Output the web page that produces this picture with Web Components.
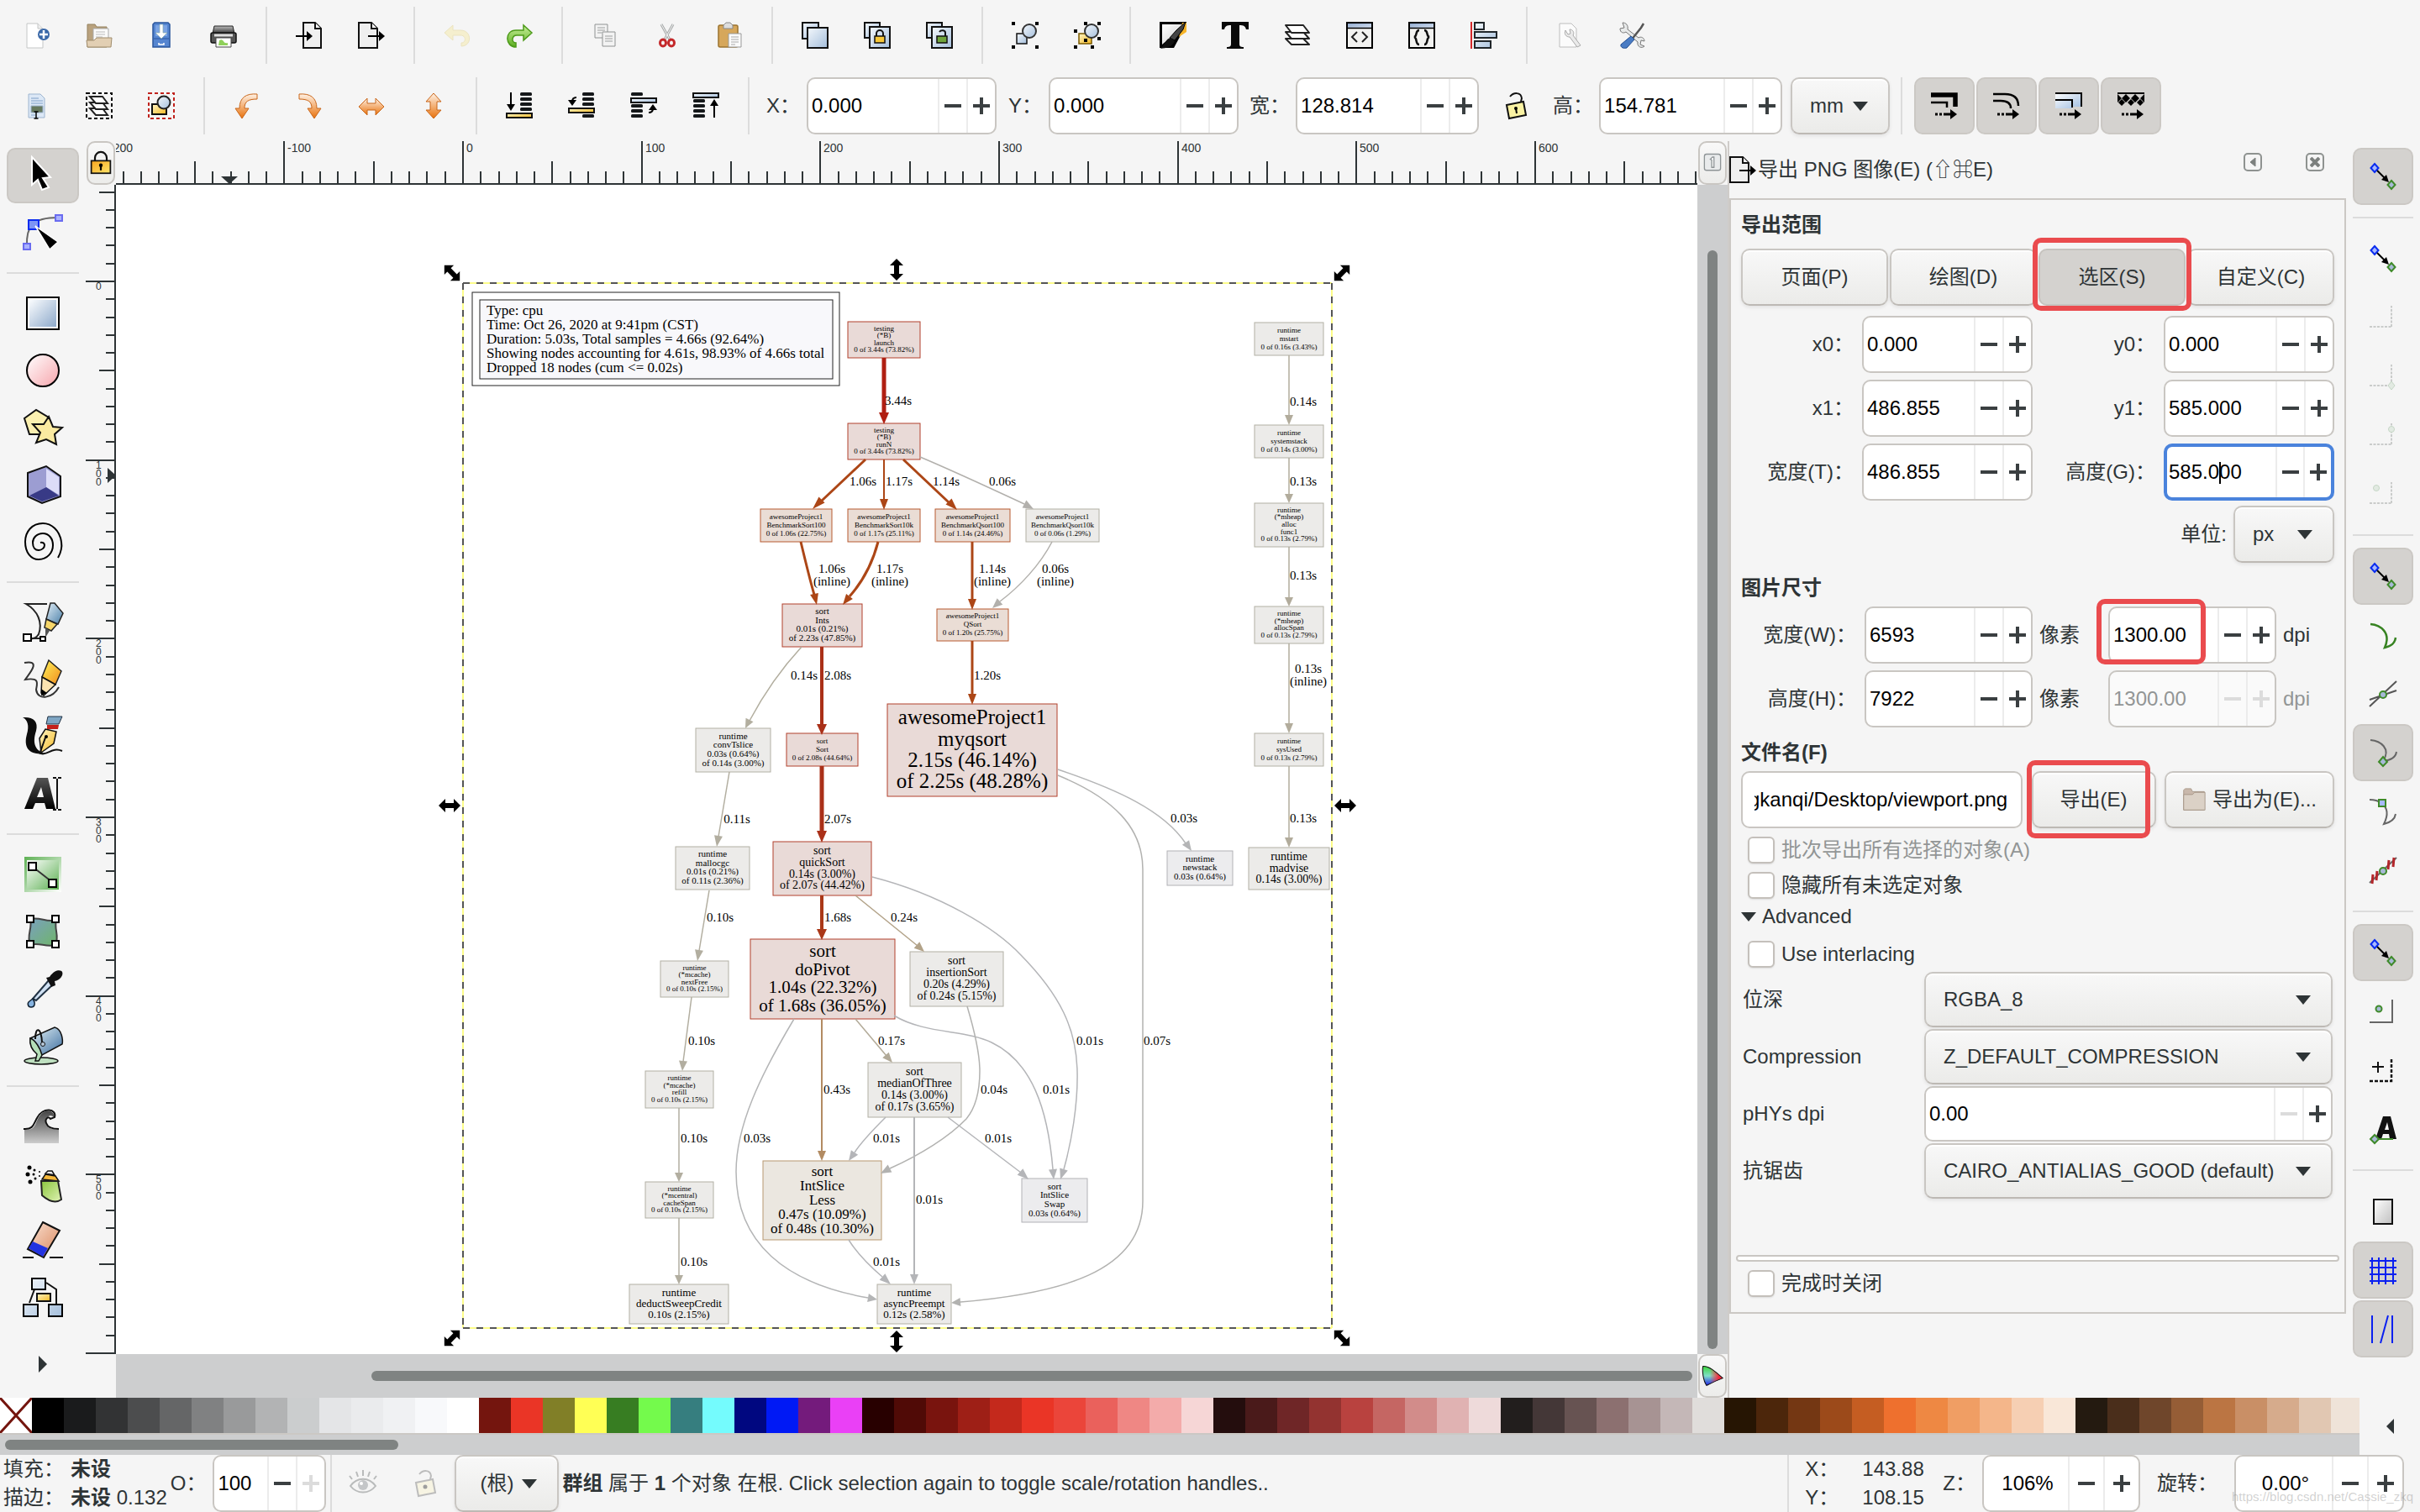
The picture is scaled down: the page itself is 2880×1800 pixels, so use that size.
<!DOCTYPE html>
<html lang="zh-CN">
<head>
<meta charset="utf-8">
<title>Inkscape</title>
<style>
  html, body {
    margin: 0;
    height: 100%;
    overflow: hidden;
  }
  body {
    font: 24px/32px "Liberation Sans", "Noto Sans CJK SC", sans-serif;
    color: #2e3436;
    background: #f5f5f5;
    --border: #c9c6c2;
    --line: #dcdcdc;
    --pressed: #d4d2cf;
    --trough: #cdcecf;
    --thumb: #7f8382;
  }
</style>
</head>
<body>
<draw-app></draw-app>

<script>
const grad = (id, a, b, dir = 'x2="1" y2="1"') =>
  `<linearGradient id="${id}" x1="0" y1="0" ${dir}><stop offset="0" stop-color="${a}"/><stop offset="1" stop-color="${b}"/></linearGradient>`
const DOWN = 'x2="0" y2="1"'
const BLUE = grad('b', '#f4f8fc', '#a5bfdc')
const GOLD = grad('g', '#fff6c8', '#f5b921')
const ORANGE = grad('o', '#fff1e4', '#e8720c', DOWN)

const PADLOCK_BODY = (x, y, fill) =>
  `<path d="M${x + 2} ${y}v-3a4 4 0 0 1 8 0v3" fill="none" stroke="#111" stroke-width="2"/><rect x="${x}" y="${y}" width="12" height="8" fill="${fill}" stroke="#111" stroke-width="1.5"/>`
const SNAP = `<path d="M8 8l11 11" stroke="#000" stroke-width="2"/><path d="M23 23l-3-9-6 6z" fill="#000"/>
  <path d="M6 1l4.500 5L6 11 1.500 6z" fill="#a9b9ff" stroke="#0a2cf0" stroke-width="2"/><path d="M26 21l4.500 5-4.500 5-4.500-5z" fill="#a7b9d6" stroke="#3f8a2a" stroke-width="2"/>`
const CORNER = '<path d="M0 27h26M26 27V2" fill="none" stroke="#8b908e" stroke-width="2" stroke-dasharray="3 1.500"/>'
const CODE_DOC = `${grad('p', '#8fa9cf', '#d8e3f2')}<rect x="1" y="1" width="30" height="30" fill="#f3f3f1" stroke="#000" stroke-width="2"/><rect x="2" y="2" width="28" height="5" fill="url(#p)"/><path d="M1 7.500h30" stroke="#000" stroke-width="1.500"/>`
const MOVE = '<path d="M5 26h3m2 0h3m2 0h9" stroke="#000" stroke-width="3"/><path d="M23 20l8 6-8 6z"/>'
const bars = (x, ys) => ys.map((y) => `<rect x="${x}" y="${y}" width="14" height="4" rx="1.500" fill="#15181a"/>`).join('')
const bend = (t) => `<g transform="${t}"><path d="M28 2C15 1 7 6 7 19H2l8 12 8-12h-5c0-8 4-11 15-11z" fill="url(#o)" stroke="#c9661a" stroke-width="1"/></g>`

// 32 unit icons
const SMALL = {
  new: `<path d="M4 2h13l6 6v23H4z" fill="#fff" stroke="#c4c6c6"/><path d="M17 2v6h6" fill="#eee" stroke="#c4c6c6"/><circle cx="24" cy="15" r="7" fill="#3a68a8"/><path d="M24 10v10M19 15h10" stroke="#fff" stroke-width="2.500"/>`,
  open: `<path d="M2 30V3h9l2 3h12v24z" fill="#b9a27e" stroke="#94805d"/><path d="M9 8h18v15H9z" fill="#fafafa" stroke="#aaa"/><path d="M12 12h11M12 15h11M12 18h8" stroke="#bbb"/><path d="M1 22h9l3-3h18l-1 11H2z" fill="#e2cfb3" stroke="#a08d6c"/>`,
  save: `<path d="M6 3l2-2h16l2 2v27H6z" fill="#5585d0" stroke="#2a559c" stroke-width="1.500"/><path d="M7 20h18" stroke="#2a559c"/><path d="M9 4h14v13H9z" fill="#7aa3e4"/><path d="M14 3h4v10h5l-7 7-7-7h5z" fill="#fff" stroke="#8aa" stroke-width=".7"/><path d="M13 25v2h6v-2" fill="none" stroke="#fff" stroke-width="1.500"/>`,
  print: `${grad('k', '#bbb', '#333', DOWN)}<path d="M5 5h22l2 9H3z" fill="url(#k)" stroke="#222"/><rect x="1" y="13" width="30" height="12" rx="2" fill="#555" stroke="#111" stroke-width="1.500"/><path d="M5 16h22" stroke="#ddd" stroke-width="3"/><path d="M7 19h18v11H7z" fill="#fff" stroke="#444"/><path d="M11 22c6-3 4 5 10 3v3H10z" fill="#8fd05a"/>`,
  import: `<path d="M9 1h14l7 7v23H9z" fill="#f0f0f0" stroke="#111" stroke-width="2"/><path d="M23 1v7h7" fill="#fff" stroke="#111" stroke-width="2"/><path d="M0 17h14" stroke="#000" stroke-width="2"/><path d="M13 11l7 6-7 6z"/>`,
  export: `<path d="M1 1h15l7 7v23H1z" fill="#efefef" stroke="#111" stroke-width="2"/><path d="M16 1v7h7" fill="#fff" stroke="#111" stroke-width="2"/><path d="M12 17h14" stroke="#000" stroke-width="2"/><path d="M25 11l7 6-7 6z"/>`,
  undo: `<g opacity=".45"><path d="M1 13L11 4v6h9c14 0 14 19 1 19v-4c6 0 6-9-1-9h-9v6z" fill="#f6e8a0" stroke="#e0cf80"/></g>`,
  redo: `${grad('q', '#c8f09a', '#5cae20', DOWN)}<path d="M31 13L21 4v6h-9C-2 10-1 30 12 30v-5c-6 0-5-9 1-9h8v6z" fill="url(#q)" stroke="#4d9a1a" stroke-width="1.500"/>`,
  copy: `<g fill="#f3f3f3" stroke="#8f9292"><path d="M4 3h15v16H4z"/><path d="M13 12h15v17H13z"/></g><path d="M7 7h9M7 10h9M7 13h5M16 17h9M16 20h9M16 23h9" stroke="#9b9e9e"/>`,
  cut: `<path d="M9 3l10 18M23 3L13 21" stroke="#a8abab" stroke-width="3"/><path d="M9 3l10 18M23 3L13 21" stroke="#f4f4f4"/><g fill="none" stroke="#c4282a" stroke-width="3"><ellipse cx="11" cy="25" rx="3.500" ry="4"/><ellipse cx="21" cy="25" rx="3.500" ry="4"/></g>`,
  paste: `<rect x="3" y="4" width="23" height="26" rx="2" fill="#d6a75b" stroke="#9c7430" stroke-width="1.500"/><path d="M9 8V4l3-3h5l3 3v4z" fill="#ddd" stroke="#888"/><path d="M15 14h15v16H15z" fill="#fafafa" stroke="#999"/><path d="M18 18h9M18 21h9M18 24h9M18 27h5" stroke="#aaa"/>`,
  duplicate: `${BLUE}<g stroke="#111" stroke-width="2" fill="url(#b)"><path d="M1 1h19v19H1z"/><path d="M7 7h24v24H7z"/></g>`,
  clone: `${BLUE}<g stroke="#111" stroke-width="2" fill="url(#b)"><path d="M1 1h18v18H1z"/><path d="M7 6h24v25H7z"/></g>${PADLOCK_BODY(13, 17, '#f8c83a')}`,
  unlink: `${BLUE}<g stroke="#111" stroke-width="2" fill="url(#b)"><path d="M1 1h18v18H1z"/><path d="M7 6h24v25H7z"/></g><rect x="13" y="17" width="12" height="8" fill="#6fa43c" stroke="#111" stroke-width="1.500"/><path d="M23 17v-4c0-3-5-4-7-1" fill="none" stroke="#111" stroke-width="2"/>`,
  group: `${BLUE}<path d="M6 14h12v12H6z" fill="url(#b)" stroke="#111" stroke-width="1.500"/><ellipse cx="21" cy="11" rx="8" ry="8" fill="url(#b)" stroke="#333" stroke-width="2"/><path d="M0 0h4v4H0zM28 0h4v4h-4zM0 28h4v4H0zM28 28h4v4h-4z"/>`,
  ungroup: `${BLUE}${GOLD}<path d="M6 14h15v12H6z" fill="url(#g)" stroke="#7a5a00" stroke-width="1.500"/><ellipse cx="21" cy="11" rx="8" ry="8" fill="url(#b)" stroke="#333" stroke-width="2"/><path d="M0 9h4v4H0zM12 0h4v4h-4zM28 0h4v4h-4zM0 28h4v4H0zM20 28h4v4h-4zM28 18h4v4h-4zM12 20h4v4h-4z"/>`,
  fill: `${grad('w', '#fff', '#ccc')}<path d="M0 0h32v3L17 31H0z" fill="#000"/><path d="M3 3h25L15 17 3 27z" fill="url(#w)"/><path d="M27 1h5v11l-9 6z" fill="#f7b52a"/><path d="M31 0L20 10l-8 9 6 3L28 9z" fill="#444" stroke="#000"/><path d="M13 19l5 4c-3 7-10 8-17 9 6-5 6-12 12-13z" fill="#111"/>`,
  text: '<path d="M0 0h32v9h-3c-1-4-3-5-8-5v22c0 3 1 4 5 4v2H6v-2c4 0 5-1 5-4V4C6 4 4 5 3 9H0z" fill="#0a0a0a"/>',
  layers: `<g fill="#fff" stroke="#222" stroke-width="2" stroke-linejoin="round"><path d="M2 20h21l7 7H9z"/><path d="M2 12h21l7 8H9z"/><path d="M2 4h21l7 9H9z"/></g>`,
  xml: `${CODE_DOC}<path d="M13 12l-6 6 6 6M19 12l6 6-6 6" fill="none" stroke="#222" stroke-width="2"/>`,
  css: `${CODE_DOC}<path d="M13 10c-5 0-2 7-6 8 4 1 1 9 6 9M19 10c5 0 2 7 6 8-4 1-1 9-6 9" fill="none" stroke="#111" stroke-width="2.500"/>`,
  align: `${BLUE}<path d="M1 0v32" stroke="#d4282a" stroke-width="2"/><g fill="url(#b)" stroke="#20262a" stroke-width="2"><path d="M5 1h11v8H5zM5 12h26v7H5zM5 23h19v8H5z"/></g>`,
  docprefs: `<g opacity=".6"><path d="M4 2h14l6 6v22H4z" fill="#fff" stroke="#999"/><path d="M11 10c-2 5 1 8 5 8l9 12 4-2-9-12c2-3 0-7-4-7l1 5-3 1z" fill="#e4e4e4" stroke="#777"/></g>`,
  prefs: `<path d="M5 1l2 6-5 1c0 5 4 6 7 4l14 12c-1 6 5 8 8 5l-5-2 1-5 4 1c0-4-4-6-7-4L11 9c1-5-2-8-6-8z" fill="#e8eaea" stroke="#777"/><path d="M30 2l-3 5-12 15" stroke="#555" stroke-width="2.500"/><path d="M15 17l4 4-9 10c-3 1-8 0-7-4z" fill="#4a7cc4" stroke="#234f92"/>`,
  selall: `<path d="M6 2h14l5 5v23H6z" fill="#dce8f6" stroke="#9db4cf"/><path d="M9 7h9M9 10h14M9 13h14M9 27h5" stroke="#7ea0c8"/><path d="M9 16h14v8H9z" fill="#66795e" stroke="#9db4cf"/><path d="M15 23v8M12.500 23h5M12.500 31h5" stroke="#000" stroke-width="1.500"/>`,
  sellayers: `<rect x="1" y="1" width="30" height="30" fill="none" stroke="#000" stroke-width="2" stroke-dasharray="4 3"/><g fill="#fff" stroke="#222" stroke-width="2"><path d="M5 19h15l6 8H12z"/><path d="M5 12h15l6 8H12z"/><path d="M5 5h15l6 8H12z"/></g>`,
  deselect: `${BLUE}${GOLD}<rect x="1" y="1" width="30" height="30" fill="none" stroke="#c0221c" stroke-width="2" stroke-dasharray="4 3"/><path d="M5 14h17v12H5z" fill="url(#g)" stroke="#111" stroke-width="2"/><circle cx="19" cy="12" r="7.500" fill="url(#b)" stroke="#222" stroke-width="2"/>`,
  rotl: `${ORANGE}${bend('')}`,
  rotr: `${ORANGE}${bend('translate(32 0) scale(-1 1)')}`,
  fliph: `${ORANGE}<path d="M1 17l10-10v6h10V7l10 10-10 10v-6H11v6z" fill="url(#o)" stroke="#c9661a"/>`,
  flipv: `${ORANGE}<path d="M16 1l9 10h-5v10h5l-9 10-9-10h5V11H7z" fill="url(#o)" stroke="#c9661a"/>`,
  bottom: `${GOLD}${bars(17, [0, 6, 12, 18])}<rect x="1" y="25" width="30" height="5" fill="url(#g)" stroke="#111" stroke-width="2"/><path d="M6 0v16" stroke="#000" stroke-width="2"/><path d="M1 14h10L6 22z"/>`,
  lower: `${GOLD}${bars(17, [0, 6, 12, 26])}<rect x="1" y="19" width="30" height="5" fill="url(#g)" stroke="#111" stroke-width="2"/><path d="M10 6c-4 0-5 2-5 5" fill="none" stroke="#000" stroke-width="2"/><path d="M0 9h10l-5 7z"/>`,
  raise: `${BLUE}${bars(1, [0, 14, 20, 26])}<rect x="1" y="7" width="30" height="5" fill="url(#b)" stroke="#111" stroke-width="2"/><path d="M22 24c4 0 5-2 5-5" fill="none" stroke="#000" stroke-width="2"/><path d="M22 21h10l-5-7z"/>`,
  top: `${BLUE}${bars(1, [8, 14, 20, 26])}<rect x="1" y="1" width="30" height="5" fill="url(#b)" stroke="#111" stroke-width="2"/><path d="M26 30V14" stroke="#000" stroke-width="2"/><path d="M21 16h10l-5-8z"/>`,
  unlock: `<path d="M5 15l20-4 3 16-20 4z" fill="#fbf3a3" stroke="#111" stroke-width="2"/><path d="M22 11l1-4C22-1 13 0 9 5" fill="none" stroke="#111" stroke-width="2"/><circle cx="16" cy="19" r="2"/><path d="M16 19l1 6" stroke="#000" stroke-width="2"/>`,
  lock: `${grad('l', '#f5a31d', '#ffe66b')}<path d="M8 14V9a8 8 0 0 1 16 0v5" fill="none" stroke="#111" stroke-width="2.500"/><rect x="3" y="13" width="26" height="17" fill="url(#l)" stroke="#111" stroke-width="2"/><circle cx="16" cy="19" r="2.500"/><path d="M16 19v7" stroke="#000" stroke-width="2.500"/>`,
  trstroke: `<path d="M0 3h29v14" fill="none" stroke="#000" stroke-width="5.500"/><path d="M0 12h19v6" fill="none" stroke="#000" stroke-width="2.500"/>${MOVE}`,
  trcorner: `<path d="M0 2h14c11 0 16 5 16 14M0 10h9c8 0 12 3 12 9" fill="none" stroke="#000" stroke-width="2.500"/>${MOVE}`,
  trgrad: `${grad('t', '#fff', '#9fbde0')}<path d="M0 1h31v16H20v2H0z" fill="url(#t)"/><path d="M0 1h31v16M0 9h20v9" fill="none" stroke="#000" stroke-width="2"/>${MOVE}`,
  trpattern: `<path d="M0 0h32v2H0z"/><path d="M0 2l5 5-5 5zM5 7l5-5 5 5-5 5zM16 7l5-5 5 5-5 5zM32 2l-5 5 5 5z"/><path d="M5 8l4 4-4 4-4-4zM16 8l4 4-4 4-4-4zM27 8l4 4-4 4-4-4z"/>${MOVE}`,
  zoomone: `<rect x="5" y="4" width="22" height="22" rx="3" fill="#e9ebec" stroke="#8e9496" stroke-width="1.500"/><path d="M13 11l3-3h2v14h-3V12z" fill="#fff" stroke="#8e9496" stroke-width="1.500"/>`,
  cms: `<defs><linearGradient id="c" x1="0" y1="0" x2="0" y2="1"><stop offset="0" stop-color="#3bd43b"/><stop offset=".5" stop-color="#7fe0c8"/><stop offset="1" stop-color="#2020e8"/></linearGradient><linearGradient id="r" x1="0" y1="0" x2="1" y2="0"><stop offset=".35" stop-color="#f33" stop-opacity="0"/><stop offset=".8" stop-color="#f32a3c"/></linearGradient></defs><path d="M3 3c8-1 17 7 27 16-8 3-14 6-22 10C3 22 2 9 3 3z" fill="url(#c)"/><path d="M3 3c8-1 17 7 27 16-8 3-14 6-22 10C3 22 2 9 3 3z" fill="url(#r)" stroke="#111" stroke-width="1.200"/>`,
  snap: SNAP,
  bbox: `${CORNER}`,
  bboxcorner: `${CORNER}<path d="M26 22l4 5-4 5-4-5z" fill="#c8dcc8" stroke="#7fa87f"/>`,
  bboxmid: `${CORNER}<circle cx="26" cy="9" r="3.500" fill="#c8dcc8" stroke="#7fa87f"/>`,
  bboxcenter: `${CORNER}<circle cx="8" cy="9" r="3.500" fill="#c8dcc8" stroke="#7fa87f"/>`,
  path: '<path d="M1 3c12 1 25 10 17 28 8-2 12-5 13-12" fill="none" stroke="#378322" stroke-width="2.500"/>',
  cross: '<path d="M0 23L32 12M0 31L32 1" stroke="#555" stroke-width="2"/><circle cx="16" cy="17" r="4" fill="#a7b9d6" stroke="#3f8a2a" stroke-width="2"/>',
  cusp: '<path d="M1 1c12 1 25 10 15 25 10-1 15-4 16-11" fill="none" stroke="#666" stroke-width="2"/><path d="M16 21l5 6-5 5-5-5z" fill="#a7b9d6" stroke="#3f8a2a" stroke-width="2"/>',
  smooth: '<path d="M0 2c7 0 10 1 14 4 7 5 9 13 3 25 8-2 13-5 14-12" fill="none" stroke="#666" stroke-width="2"/><rect x="11" y="2" width="8" height="8" fill="#a7b9ff" stroke="#3f8a2a" stroke-width="2"/>',
  midline: '<path d="M0 31L32 1" stroke="#666" stroke-width="2"/><path d="M4 21l-1 11M9 17l-1 11M23 4l-1 11M29 1l-1 11" stroke="#b3262a" stroke-width="3"/><circle cx="16" cy="17" r="4" fill="#a7b9d6" stroke="#3f8a2a" stroke-width="2"/>',
  objcenter: '<path d="M0 29h27V2" fill="none" stroke="#666" stroke-width="2"/><circle cx="11" cy="13" r="3.500" fill="#a7b9d6" stroke="#3f8a2a" stroke-width="2"/>',
  rotcenter: '<path d="M0 29h26V2" fill="none" stroke="#111" stroke-width="2.500" stroke-dasharray="4 2"/><path d="M10 6v13M3 12h14" stroke="#111" stroke-width="2"/>',
  baseline: '<path d="M7 28L16 1h9l7 27h-8l-1-6h-7l-2 6zM18 17h5l-2-9z" fill="#111"/><path d="M6 28h22" stroke="#3f8a2a" stroke-width="2"/><path d="M6 23l5 5-5 5-5-5z" fill="#a7b9d6" stroke="#3f8a2a" stroke-width="2"/>',
  page: `${grad('w', '#fff', '#c0c0c0')}<rect x="5" y="2" width="22" height="29" fill="url(#w)" stroke="#111" stroke-width="2"/>`,
  grid: '<path d="M0 5h32M0 13h32M0 21h32M0 29h32M3 1v32M11 1v32M19 1v32M28 1v32" stroke="#0a20f0" stroke-width="2"/>',
  guides: '<path d="M3 0v33M27 0v33M13 33L22 0" stroke="#0a20f0" stroke-width="2"/>',
  folder: '<path d="M2 30V3l2-2h8l2 4h16v25z" fill="#c9b8ab" stroke="#a39284"/><path d="M2 30V9h12l3-3h14v24z" fill="#dbd1c6" stroke="#a39284"/>',
  eye: '<g fill="none" stroke="#b9bbbb" stroke-width="2"><path d="M1 19c8-11 22-11 30 0-8 10-22 10-30 0z"/><path d="M3 11L0 7M10 8L8 2M16 7V0M22 8l2-6M29 11l3-4"/></g><circle cx="16" cy="18" r="6" fill="#c4c6c8"/><circle cx="14" cy="16" r="2" fill="#fff"/>',
  unlockdim: '<g opacity=".35"><path d="M5 15l20-4 3 16-20 4z" fill="#fbf3c3" stroke="#555" stroke-width="2"/><path d="M22 11l1-4C22-1 13 0 9 5" fill="none" stroke="#555" stroke-width="2"/><circle cx="16" cy="20" r="2.500"/></g>',
}

// 48 unit toolbox icons
const LARGE = {
  arrow: '<path d="M11 2l22 24-9 1 7 11-8 3-5-12-7 6z" fill="#000" stroke="#fff" stroke-width="2"/>',
  node: '<path d="M5 40C4 16 12 6 42 6" fill="none" stroke="#666" stroke-width="2"/><g fill="#aab2ff" stroke="#6a6cf0" stroke-width="2"><path d="M1 37h8v7H1zM39 3h8v7h-8z"/></g><path d="M7 9h12v11H7z" fill="#7d95f5" stroke="#0a2cf0" stroke-width="2"/><path d="M15 16l27 19-10 9z" stroke="#fff" stroke-width="1.500"/>',
  rect: `${grad('b', '#fafcfe', '#8eaacb')}<rect x="5" y="5" width="38" height="38" fill="#fff" stroke="#000" stroke-width="2"/><rect x="8" y="8" width="32" height="32" fill="url(#b)"/>`,
  ellipse: `${grad('p', '#fff', '#f6a5ac')}<circle cx="24" cy="24" r="19" fill="url(#p)" stroke="#000" stroke-width="2"/>`,
  star: `<path d="M2 13L16 3l15 9-6 20H8z" fill="#fbf0b0" stroke="#111" stroke-width="2"/><path d="M31 11l5 12 11 1-9 8 2 12-12-6-12 4 5-12-9-10 13 0z" fill="#faeaa0" stroke="#111" stroke-width="2"/>`,
  cube: `<path d="M6 10L28 2l17 12v24L23 46 6 38z" fill="#9c9dd2" stroke="#111" stroke-width="2"/><path d="M28 5v22l15 9V15z" fill="#dcdcf8"/><path d="M8 37l20-10 15 10-20 7z" fill="#383a86"/>`,
  spiral: '<path d="M42 43C46 36 47 30 46 24C44 10 34 2 24 2C11 2 3 12 3 24C3 37 10 45 19 45C29 45 36 37 36 28C36 20 31 14 24 14C17 14 12 19 12 25C12 31 15 34 19 34C23 34 26 31 26 28C26 26 24 24 21 25" fill="none" stroke="#000" stroke-width="2"/>',
  pen: `${grad('b', '#e1eef7', '#4a7fa8')}<path d="M29 2H4c14 8 20 22 15 36-3 5-8 6-13 5M6 43h18" fill="none" stroke="#222" stroke-width="2"/><path d="M1 38h9v8H1zM21 41h6v5h-6z" fill="#fff" stroke="#000" stroke-width="2"/><path d="M33 1h5l10 12-6 13-14-6z" fill="url(#b)" stroke="#222" stroke-width="1.500"/><path d="M28 20l13 6-7 8-8-4z" fill="#f6d66a" stroke="#222" stroke-width="1.500"/><path d="M27 30l5 4-5 8z" fill="#555"/>`,
  pencil: `${grad('y', '#fff45a', '#f08a1c')}<path d="M2 4C24 0 6 19 3 24c18-3 14 5 13 12 2 14 20 10 27-3" fill="none" stroke="#333" stroke-width="2"/><path d="M31 1l15 13-7 16-16-9z" fill="url(#y)" stroke="#222" stroke-width="1.500"/><path d="M23 21l16 9-14 13-3-3z" fill="#fbe3b0" stroke="#111" stroke-width="1.500"/><path d="M22 35l7 5-7 3z"/>`,
  calligraphy: `${GOLD}<path d="M0 1c12-1 19 4 16 16-4 12-3 23 10 27C10 46 0 39 5 21 8 11 6 4 0 1z" fill="#0c0c0c"/><path d="M17 42c12 8 16-7 30-1" fill="none" stroke="#111" stroke-width="2"/><path d="M30 0h17l-4 9H28z" fill="#7fa6c4" stroke="#234"/><path d="M29 10h14l-1 5H29z" fill="#c4211b"/><path d="M27 15l13 3-3 14-15 11-2-17z" fill="url(#g)" stroke="#111" stroke-width="1.500"/><path d="M21 42l6-17" stroke="#111" stroke-width="2"/><circle cx="28" cy="24" r="2"/>`,
  text: `${grad('k', '#555', '#000', DOWN)}<path d="M2 42L17 5h13l9 37H28l-2-7H15l-3 7zM17 28h8l-3-12z" fill="url(#k)"/><path d="M41 6v36M36 5h4M42 5h4M36 43h4M42 43h4" stroke="#111" stroke-width="2"/>`,
  gradient: `${grad('n', '#fff', '#5db053')}${grad('m', '#5db053', '#fff')}<rect x="2" y="3" width="44" height="42" fill="url(#m)"/><rect x="5" y="7" width="38" height="35" fill="url(#n)"/><path d="M12 15l23 18" stroke="#333" stroke-width="2"/><path d="M7 10h9v9H7zM31 30h9v9h-9z" fill="#fff" stroke="#000" stroke-width="2"/>`,
  mesh: `${grad('m', '#7aa0c0', '#6fb56a')}<path d="M9 9c12-3 20 5 31 1-3 12 4 18-1 30-12 3-20-4-30 0-5-12 3-19 0-31z" fill="url(#m)" stroke="#444" stroke-width="2"/><g fill="#fff" stroke="#000" stroke-width="2"><path d="M5 5h8v8H5zM35 5h8v8h-8zM5 35h8v8H5zM35 35h8v8h-8z"/></g>`,
  dropper: `<path d="M12 36l19-22 5 5-20 19z" fill="#cfe0f2" stroke="#234" stroke-width="2"/><path d="M28 11l4-1c7-10 14-8 15-6 2 4-3 10-9 11l1 5-5 2z" fill="#111"/><path d="M12 36c4 6 2 10-2 10s-5-5-2-7z" fill="#86b3e0" stroke="#123" stroke-width="1.500"/>`,
  bucket: `${grad('b', '#eaf6f8', '#3c6ea0')}<ellipse cx="22" cy="42" rx="20" ry="4" fill="#bfe0c0" stroke="#111" stroke-width="1.500"/><path d="M9 15L38 2c9 2 10 16 9 20L23 35C14 30 8 22 9 15z" fill="url(#b)" stroke="#111" stroke-width="1.500"/><path d="M9 15c6 2 12 12 14 20l-4 7h-4l2-8C11 29 8 22 9 15z" fill="#b5dfb8" stroke="#111" stroke-width="1.500"/><path d="M15 16c0-16 7-14 8 4" fill="none" stroke="#111" stroke-width="2"/><circle cx="24" cy="22" r="2.500" fill="#bcd" stroke="#111"/>`,
  tweak: `${grad('k', '#444', '#ccc', DOWN)}<path d="M2 28c12 1 12-5 16-13C24 2 38 3 38 14c-3-5-11-3-10 5 1 7 8 9 15 9v16H2z" fill="url(#k)"/><path d="M1 27c12 1 12-6 16-13C24 0 41 3 38 13l-5 2c-2-4-7 0-5 5 2 6 8 7 15 7" fill="none" stroke="#111" stroke-width="2"/>`,
  spray: `${grad('s', '#8bc63e', '#dff2b4')}<circle cx="8" cy="5" r="2.500"/><circle cx="6" cy="13" r="2.500"/><circle cx="9" cy="22" r="2.500"/><circle cx="14" cy="8" r="1.500"/><circle cx="13" cy="13" r="1.500"/><circle cx="15" cy="18" r="1.500"/><circle cx="20" cy="10" r="1"/><circle cx="20" cy="15" r="1"/><path d="M27 12l3-3h5l3 5z" fill="#eee" stroke="#111" stroke-width="1.500"/><path d="M23 19l4-6 12 2 4 6z" fill="#f5b83a" stroke="#111" stroke-width="1.500"/><path d="M22 21h20l4 22c-7 5-15 2-23-5z" fill="url(#s)" stroke="#222" stroke-width="2"/>`,
  eraser: `${grad('e', '#fbe4d6', '#d9855a')}<path d="M24 2l20 10-19 32-19-10z" fill="url(#e)" stroke="#111" stroke-width="2"/><path d="M12 25l18 8-6 10L7 33z" fill="#2233e0"/><path d="M0 44h13M32 44h16" stroke="#111" stroke-width="2"/>`,
  connector: `${BLUE}${GOLD}<path d="M28 6l12 8v18M14 14L8 30" fill="none" stroke="#111" stroke-width="2"/><g fill="url(#b)" stroke="#000" stroke-width="2"><path d="M11 1h16v13H11zM1 32h17v14H1zM31 32h16v14H31z"/></g><path d="M17 19h16v9H17z" fill="url(#g)" stroke="#111" stroke-width="2"/>`,
}

// Shared plumbing: each element renders css() + html() once connected.
class View extends HTMLElement {
  connectedCallback() {
    if (this.shadowRoot) return
    this.attachShadow({ mode: 'open' })
    this.shadowRoot.innerHTML = `<style>*{box-sizing:border-box}${this.css()}</style>${this.html()}`
    this.ready()
  }
  attr(name, fallback = '') {
    return this.getAttribute(name) ?? fallback
  }
  css() { return '' }
  html() { return '<slot></slot>' }
  ready() {}
}

class AppIcon extends View {
  css() {
    const s = this.attr('size', '32')
    return `:host{display:block;flex:none;width:${s}px;height:${s}px} svg{display:block;width:100%;height:100%;overflow:visible}`
  }
  html() {
    const name = this.attr('name')
    const large = this.hasAttribute('large')
    const box = large ? 48 : 32
    return `<svg viewBox="0 0 ${box} ${box}" aria-hidden="true">${(large ? LARGE : SMALL)[name]}</svg>`
  }
}

class ToolButton extends View {
  css() {
    return `
      :host { display: block; flex: none; width: 74px; height: 68px; padding: 0 1px; box-sizing: border-box; }
      :host([large]) { width: 86px; height: 66px; padding: 0; }
      :host([side]) { width: 72px; padding: 0; }
      :host([corner]) { width: 100%; height: 100%; padding: 0 1px; }
      button { width: 100%; height: 100%; padding: 0; display: grid; place-items: center; border: 2px solid transparent; border-radius: 10px; background: none; }
      :host([pressed]) button { background: var(--pressed); border-color: #cbc8c4; }
      :host([corner]) button { border-color: var(--border); background: linear-gradient(#f8f8f8, #ececea); }
    `
  }
  html() {
    const large = this.hasAttribute('large')
    const size = this.attr('size', large ? '48' : '32')
    return `<button type="button" aria-label="${this.attr('icon')}"><app-icon name="${this.attr('icon')}" size="${size}" ${large ? 'large' : ''}></app-icon></button>`
  }
}

class ToolSep extends View {
  css() {
    return `
      :host { display: block; flex: none; width: 2px; height: 68px; margin: 0 13px; background: var(--line); }
      :host([row]) { width: auto; height: 2px; margin: 12px 0; }
    `
  }
  html() { return '' }
}

class SpinBox extends View {
  css() {
    return `
      :host { display: flex; align-items: center; }
      label { flex: 1; text-align: var(--label-align, right); white-space: nowrap; padding-right: var(--label-gap, 8px); }
      .field { position: relative; flex: none; display: flex; width: var(--field, 203px); height: 68px; border: 2px solid var(--border); border-radius: 10px; background: #fff; overflow: hidden; }
      :host([short]) .field { height: 66px; }
      input { flex: 1; min-width: 0; border: 0; padding: 0 0 0 4px; background: none; font: inherit; color: #000; outline: 0; text-align: var(--align, left); }
      button { flex: none; width: var(--step, 34px); padding: 0; border: 0; border-left: 2px solid #ececec; background: none; display: grid; place-items: center; }
      svg { width: 20px; height: 20px; stroke: #3a3f41; stroke-width: 4; }
      .off svg { stroke: #dcdcdc; }
      :host([focused]) .field { border: 4px solid #4a83dc; }
      :host([focused]) input { padding-left: 2px; }
      :host([focused]) button { width: 33px; }
      :host([disabled]) .field { background: #fafafa; }
      :host([disabled]) input { color: #929595; }
      .caret { position: absolute; left: 62px; top: 18px; width: 2px; height: 26px; background: #000; }
    `
  }
  html() {
    const dis = this.hasAttribute('disabled')
    const off = this.attr('off')
    const cls = (k) => (dis || off === k ? 'class="off"' : '')
    const label = this.attr('label')
    return `
      ${label ? `<label for="v">${label}</label>` : ''}
      <div class="field">
        <input id="v" value="${this.attr('value')}" ${label ? '' : `aria-label="${this.attr('name')}"`} ${dis ? 'disabled' : ''}>
        <button type="button" ${cls('minus')} aria-label="-"><svg viewBox="0 0 20 20"><path d="M0 10h20"/></svg></button>
        <button type="button" ${cls('plus')} aria-label="+"><svg viewBox="0 0 20 20"><path d="M0 10h20M10 0v20"/></svg></button>
        ${this.hasAttribute('focused') ? '<span class="caret"></span>' : ''}
      </div>`
  }
}

class ComboBox extends View {
  css() {
    return `
      :host { display: flex; align-items: center; }
      label { flex: 1; white-space: nowrap; padding-right: 8px; }
      .box { flex: none; display: grid; width: var(--field, 118px); height: var(--h, 68px); border: 2px solid var(--border); border-bottom-color: #bdb9b4; border-radius: 10px; background: linear-gradient(#f8f8f8, #ebebe9); box-shadow: inset 0 2px #fff, 0 2px 4px rgba(0,0,0,.08); }
      select, svg { grid-area: 1 / 1; }
      select { appearance: none; border: 0; background: none; padding: 0 0 0 var(--inset, 21px); font: inherit; color: inherit; }
      svg { justify-self: end; align-self: center; margin-right: var(--arrow, 24px); width: 18px; height: 11px; pointer-events: none; fill: #2e3436; }
    `
  }
  html() {
    const label = this.attr('label')
    return `
      ${label ? `<label for="s">${label}</label>` : ''}
      <div class="box">
        <select id="s" ${label ? '' : 'aria-label="unit"'}><option>${this.attr('value')}</option></select>
        <svg viewBox="0 0 18 11"><path d="M0 0h18l-9 11z"/></svg>
      </div>`
  }
}

class PushButton extends View {
  css() {
    return `
      :host { display: block; }
      button { width: 100%; height: 68px; padding: 0; display: flex; gap: 8px; align-items: center; justify-content: center; font: inherit; color: inherit; white-space: nowrap; border: 2px solid var(--border); border-bottom-color: #bdb9b4; border-radius: 10px; background: linear-gradient(#f8f8f8, #ebebe9); box-shadow: inset 0 2px #fff, 0 2px 4px rgba(0,0,0,.08); }
      :host([pressed]) button { background: var(--pressed); box-shadow: none; border-color: #c6c3bf; }
    `
  }
  html() { return '<button type="button"><slot></slot></button>' }
}

class CheckBox extends View {
  css() {
    return `
      :host { display: block; padding-left: 8px; }
      label { display: flex; align-items: center; gap: 8px; height: 32px; }
      input { appearance: none; flex: none; margin: 0; width: 32px; height: 32px; border: 2px solid #c4c0bb; border-radius: 6px; background: #fff; box-shadow: 0 1px 2px rgba(0,0,0,.1); }
      :host([disabled]) { color: #929595; }
    `
  }
  html() {
    return `<label><input type="checkbox" ${this.hasAttribute('disabled') ? 'disabled' : ''}><slot></slot></label>`
  }
}

// Red frame drawn over the control it wraps.
class MarkBox extends View {
  css() {
    return `
      :host { display: block; position: relative; }
      i { position: absolute; inset: var(--mark, -8px); border: 6px solid #ea4b4e; border-radius: 10px; pointer-events: none; z-index: 1; }
    `
  }
  html() { return '<slot></slot><i></i>' }
}

class CommandBar extends View {
  css() {
    return `:host { display: flex; align-items: center; height: 84px; padding: 0 7px; box-sizing: border-box; flex: none; }`
  }
  html() {
    const groups = [
      ['new', 'open', 'save', 'print'], ['import', 'export'], ['undo', 'redo'], ['copy', 'cut', 'paste'],
      ['duplicate', 'clone', 'unlink'], ['group', 'ungroup'],
      ['fill', 'text', 'layers', 'xml', 'css', 'align'], ['docprefs', 'prefs'],
    ]
    return groups.map((g) => g.map((n) => `<tool-button icon="${n}"></tool-button>`).join('')).join('<tool-sep></tool-sep>')
  }
}

class SelectBar extends View {
  css() {
    return `
      :host { display: flex; align-items: center; height: 84px; padding: 0 7px; box-sizing: border-box; flex: none; }
      spin-box { margin-left: 14px; --field: 226px; }
      .x { margin-left: 7px; }
      .w { --field: 218px; --label-gap: 7px; margin-left: 13px; }
      .h { --field: 218px; --label-gap: 7px; margin-left: 7px; }
      .lock { margin-left: 7px; }
      combo-box { margin-left: 10px; }
    `
  }
  html() {
    const b = (list, extra = '') => list.map((n) => `<tool-button icon="${n}" ${extra}></tool-button>`).join('')
    return `
      ${b(['selall', 'sellayers', 'deselect'])}<tool-sep></tool-sep>
      ${b(['rotl', 'rotr', 'fliph', 'flipv'])}<tool-sep></tool-sep>
      ${b(['bottom', 'lower', 'raise', 'top'])}<tool-sep></tool-sep>
      <spin-box class="x" label="X：" value="0.000"></spin-box>
      <spin-box label="Y：" value="0.000"></spin-box>
      <spin-box class="w" label="宽：" value="128.814"></spin-box>
      <tool-button class="lock" icon="unlock"></tool-button>
      <spin-box class="h" label="高：" value="154.781"></spin-box>
      <combo-box value="mm"></combo-box><tool-sep></tool-sep>
      ${b(['trstroke', 'trcorner', 'trgrad', 'trpattern'], 'pressed')}`
  }
}

class ToolBox extends View {
  css() {
    return `
      :host { display: flex; flex-direction: column; gap: 2px; width: 102px; padding: 8px 8px 0; box-sizing: border-box; flex: none; overflow: hidden; }
      button { margin: auto 0 28px; height: 24px; padding: 0; border: 0; background: none; }
      svg { display: block; width: 10px; height: 20px; margin: 0 auto; fill: #2e3436; }
    `
  }
  html() {
    const groups = [
      ['arrow', 'node'], ['rect', 'ellipse', 'star', 'cube', 'spiral'], ['pen', 'pencil', 'calligraphy', 'text'],
      ['gradient', 'mesh', 'dropper', 'bucket'], ['tweak', 'spray', 'eraser', 'connector'],
    ]
    return groups.map((g) => g.map((n) => `<tool-button large icon="${n}" ${n === 'arrow' ? 'pressed' : ''}></tool-button>`).join('')).join('<tool-sep row></tool-sep>') +
      '<button type="button" aria-label="more"><svg viewBox="0 0 10 20"><path d="M0 0l10 10L0 20z"/></svg></button>'
  }
}

class SnapBar extends View {
  css() {
    return `
      :host { display: flex; flex-direction: column; gap: 2px; width: 88px; padding: 8px; box-sizing: border-box; flex: none; overflow: hidden; }
      .dim { opacity: .4; }
    `
  }
  html() {
    const groups = [
      ['*snap'], ['snap', 'bbox', 'bboxcorner', 'bboxmid', 'bboxcenter'],
      ['*snap', 'path', 'cross', '*cusp', 'smooth', 'midline'],
      ['*snap', 'objcenter', 'rotcenter', 'baseline'], ['page', '*grid', '*guides'],
    ]
    const dim = (n) => (n.startsWith('bbox') ? 'class="dim"' : '')
    return groups.map((g) => g.map((n) => `<tool-button side ${dim(n)} icon="${n.replace('*', '')}" ${n[0] === '*' ? 'pressed' : ''}></tool-button>`).join('')).join('<tool-sep row></tool-sep>')
  }
}

const UNIT = 638 / 30 // ten user units on screen

class RulerBar extends View {
  css() {
    return `
      :host { display: block; overflow: hidden; min-width: 0; min-height: 0; }
      svg { display: block; width: 100%; height: 100%; font-size: 14px; fill: #2e3436; }
      :host([vertical]) svg { font-size: 12px; }
      path.t { fill: none; stroke: #2e3436; stroke-width: 2; }
    `
  }
  html() {
    const vertical = this.hasAttribute('vertical')
    const origin = vertical ? 115 : 413
    const depth = vertical ? 36 : 52
    let d = ''
    let labels = ''
    for (let i = -20; i < 80; i++) {
      const p = Math.round(origin + i * UNIT)
      const from = i % 10 === 0 ? 0 : i % 5 === 0 ? (vertical ? 16 : 24) : (vertical ? 24 : 36)
      d += vertical ? `M${from} ${p}H${depth}` : `M${p} ${from}V${depth}`
      if (i % 10) continue
      const text = String(i * 10)
      if (!vertical) {
        if (p < 1882) labels += `<text x="${p + 4}" y="13">${text}</text>`
      } else if (i >= 0 && i <= 50) {
        [...text].forEach((c, k) => { labels += `<text x="12" y="${p + 10 + k * 10}">${c}</text>` })
      }
    }
    const edge = vertical ? 'M35 0V4000' : 'M0 51H4000'
    const mark = vertical ? 'M26 337l10 9-10 9z' : 'M125 42h20l-10 9z'
    return `<svg><path class="t" d="${d}${edge}"/>${labels}<path d="${mark}"/></svg>`
  }
}

class ScrollTrack extends View {
  css() {
    return `
      :host { display: flex; background: var(--trough); padding: 20px 6px 20px 304px; }
      :host([vertical]) { padding: 78px 12px 6px; }
      i { flex: 1; border-radius: 6px; background: var(--thumb); }
    `
  }
  html() { return '<i></i>' }
}

const RED = ['#b2402c', '#e9dad7']
const RUST = ['#b85a30', '#eaddd5']
const GREY = ['#b2b0a4', '#ecebe9']
const COOL = ['#b2b2b6', '#ececee']
// x, y, width, height, text size, colours, lines
const NODES = [
  [1009, 383, 86, 43, 9, RED, 'testing|(*B)|launch|0 of 3.44s (73.82%)'],
  [1009, 504, 86, 43, 9, RED, 'testing|(*B)|runN|0 of 3.44s (73.82%)'],
  [905, 606, 85, 39, 9, RUST, 'awesomeProject1|BenchmarkSort100|0 of 1.06s (22.75%)'],
  [1009, 606, 86, 39, 9, RUST, 'awesomeProject1|BenchmarkSort10k|0 of 1.17s (25.11%)'],
  [1113, 606, 89, 39, 9, RUST, 'awesomeProject1|BenchmarkQsort100|0 of 1.14s (24.46%)'],
  [1221, 606, 87, 39, 9, GREY, 'awesomeProject1|BenchmarkQsort10k|0 of 0.06s (1.29%)'],
  [931, 719, 95, 51, 11, RED, 'sort|Ints|0.01s (0.21%)|of 2.23s (47.85%)'],
  [1115, 725, 85, 38, 9, RUST, 'awesomeProject1|QSort|0 of 1.20s (25.75%)'],
  [828, 867, 89, 52, 11, GREY, 'runtime|convTslice|0.03s (0.64%)|of 0.14s (3.00%)'],
  [936, 873, 85, 39, 9, RED, 'sort|Sort|0 of 2.08s (44.64%)'],
  [1056, 838, 202, 110, 25, RED, 'awesomeProject1|myqsort|2.15s (46.14%)|of 2.25s (48.28%)'],
  [804, 1008, 88, 51, 11, GREY, 'runtime|mallocgc|0.01s (0.21%)|of 0.11s (2.36%)'],
  [920, 1002, 117, 64, 14, RED, 'sort|quickSort|0.14s (3.00%)|of 2.07s (44.42%)'],
  [786, 1144, 81, 43, 9, GREY, 'runtime|(*mcache)|nextFree|0 of 0.10s (2.15%)'],
  [893, 1118, 172, 95, 21, RED, 'sort|doPivot|1.04s (22.32%)|of 1.68s (36.05%)'],
  [1083, 1133, 111, 65, 14, GREY, 'sort|insertionSort|0.20s (4.29%)|of 0.24s (5.15%)'],
  [768, 1275, 81, 44, 9, GREY, 'runtime|(*mcache)|refill|0 of 0.10s (2.15%)'],
  [1033, 1265, 111, 65, 14, GREY, 'sort|medianOfThree|0.14s (3.00%)|of 0.17s (3.65%)'],
  [908, 1382, 141, 94, 17, ['#b89870', '#ebe7e0'], 'sort|IntSlice|Less|0.47s (10.09%)|of 0.48s (10.30%)'],
  [1216, 1403, 78, 52, 11, COOL, 'sort|IntSlice|Swap|0.03s (0.64%)'],
  [768, 1407, 81, 43, 9, GREY, 'runtime|(*mcentral)|cacheSpan|0 of 0.10s (2.15%)'],
  [749, 1529, 118, 47, 13, GREY, 'runtime|deductSweepCredit|0.10s (2.15%)'],
  [1044, 1529, 88, 47, 13, GREY, 'runtime|asyncPreempt|0.12s (2.58%)'],
  [1493, 384, 82, 39, 9, GREY, 'runtime|mstart|0 of 0.16s (3.43%)'],
  [1493, 506, 82, 39, 9, GREY, 'runtime|systemstack|0 of 0.14s (3.00%)'],
  [1493, 599, 82, 52, 9, GREY, 'runtime|(*mheap)|alloc|func1|0 of 0.13s (2.79%)'],
  [1493, 722, 82, 44, 9, GREY, 'runtime|(*mheap)|allocSpan|0 of 0.13s (2.79%)'],
  [1493, 873, 82, 39, 9, GREY, 'runtime|sysUsed|0 of 0.13s (2.79%)'],
  [1486, 1009, 96, 50, 14, GREY, 'runtime|madvise|0.14s (3.00%)'],
  [1389, 1013, 78, 41, 11, COOL, 'runtime|newstack|0.03s (0.64%)'],
]
// path, arrow base, arrow tip, colour, stroke, label x, baseline, label
const EDGES = [
  ['M1052 426L1052 492', 1052, 491, 1052, 505, '#b01f12', 5, 1069, 482, '3.44s'],
  ['M1030 547L978 596', 978, 595, 967, 606, '#ac4616', 3, 1027, 578, '1.06s'],
  ['M1052 547L1052 595', 1052, 594, 1052, 607, '#ac4616', 2, 1070, 578, '1.17s'],
  ['M1075 547L1129 598', 1129, 597, 1139, 607, '#ac4616', 3, 1126, 578, '1.14s'],
  ['M1095 544C1140 563 1180 582 1219 600', 1219, 600, 1230, 606, '#b2b0ac', 1.5, 1193, 578, '0.06s'],
  ['M953 645C958 666 963 687 969 708', 969, 707, 972, 720, '#ac4616', 3, 990, 682, '1.06s|(inline)'],
  ['M1045 645C1038 672 1027 692 1011 710', 1011, 710, 1003, 720, '#ac4616', 3, 1059, 682, '1.17s|(inline)'],
  ['M1157 645L1157 713', 1157, 713, 1157, 726, '#ac4616', 3, 1181, 682, '1.14s|(inline)'],
  ['M1252 645C1238 672 1214 698 1190 716', 1190, 716, 1181, 724, '#b2b0ac', 1.5, 1256, 682, '0.06s|(inline)'],
  ['M954 770C930 796 908 828 892 858', 892, 857, 887, 867, '#b2ae9f', 1.5, 957, 809, '0.14s'],
  ['M978 770L978 863', 978, 862, 978, 875, '#aa3018', 4, 997, 809, '2.08s'],
  ['M978 912L978 990', 978, 989, 978, 1003, '#aa3018', 5, 997, 980, '2.07s'],
  ['M1157 763L1157 827', 1157, 826, 1157, 839, '#ac4616', 3, 1175, 809, '1.20s'],
  ['M978 1066L978 1107', 978, 1106, 978, 1119, '#aa3818', 4, 997, 1097, '1.68s'],
  ['M1018 1066L1092 1126', 1091, 1125, 1100, 1133, '#b2a288', 1.5, 1076, 1097, '0.24s'],
  ['M1038 1044C1120 1065 1185 1105 1215 1137C1262 1185 1281 1225 1282 1275C1283 1315 1275 1360 1266 1392', 1266, 1392, 1262, 1404, '#b4b5b8', 1.5, 1297, 1244, '0.01s'],
  ['M1064 1209C1100 1231 1150 1226 1180 1241C1228 1264 1247 1320 1253 1392', 1253, 1392, 1254, 1404, '#b4b5b8', 1.5, 1257, 1302, '0.01s'],
  ['M1018 1213L1055 1257', 1054, 1256, 1062, 1265, '#b2aa98', 1.5, 1061, 1244, '0.17s'],
  ['M978 1213L978 1370', 978, 1370, 978, 1382, '#b28b62', 2, 996, 1302, '0.43s'],
  ['M945 1213C905 1280 876 1340 876 1395C876 1480 935 1528 1033 1545', 1033, 1545, 1044, 1547, '#b4b5b6', 1.5, 901, 1360, '0.03s'],
  ['M1151 1198C1162 1235 1166 1260 1166 1275C1166 1300 1160 1320 1150 1332C1130 1353 1095 1375 1059 1391', 1059, 1391, 1048, 1397, '#b2b2b0', 1.5, 1183, 1302, '0.04s'],
  ['M1054 1330C1042 1342 1026 1358 1017 1372', 1017, 1372, 1010, 1382, '#b4b5b8', 1.5, 1055, 1360, '0.01s'],
  ['M1088 1330L1088 1518', 1088, 1517, 1088, 1529, '#b4b5b8', 2, 1106, 1433, '0.01s'],
  ['M1128 1330L1215 1396', 1214, 1395, 1224, 1404, '#b4b5b8', 1.5, 1188, 1360, '0.01s'],
  ['M1010 1476C1020 1492 1036 1508 1050 1520', 1050, 1520, 1060, 1529, '#b4b5b8', 1.5, 1055, 1507, '0.01s'],
  ['M1259 916C1330 940 1385 965 1411 1004', 1411, 1003, 1418, 1013, '#b4b5b6', 1.5, 1409, 979, '0.03s'],
  ['M1259 923C1325 950 1360 985 1360 1035V1430C1360 1515 1260 1540 1143 1550', 1143, 1550, 1132, 1551, '#b2b2b0', 1.5, 1377, 1244, '0.07s'],
  ['M868 919L855 996', 855, 995, 853, 1008, '#b2aea0', 1.5, 877, 980, '0.11s'],
  ['M844 1060L832 1132', 832, 1131, 830, 1144, '#b2aea0', 1.5, 857, 1097, '0.10s'],
  ['M823 1187L813 1264', 813, 1263, 812, 1275, '#b2aea0', 1.5, 835, 1244, '0.10s'],
  ['M808 1319L808 1396', 808, 1396, 808, 1407, '#b2aea0', 1.5, 826, 1360, '0.10s'],
  ['M808 1450L808 1519', 808, 1518, 808, 1529, '#b2aea0', 1.5, 826, 1507, '0.10s'],
  ['M1534 423L1534 495', 1534, 494, 1534, 506, '#b2ac9c', 1.5, 1551, 483, '0.14s'],
  ['M1534 545L1534 588', 1534, 588, 1534, 599, '#b2ac9c', 1.5, 1551, 578, '0.13s'],
  ['M1534 651L1534 711', 1534, 711, 1534, 722, '#b2ac9c', 1.5, 1551, 690, '0.13s'],
  ['M1534 766L1534 862', 1534, 861, 1534, 873, '#b2ac9c', 1.5, 1557, 801, '0.13s|(inline)'],
  ['M1534 912L1534 998', 1534, 997, 1534, 1009, '#b2ac9c', 1.5, 1551, 979, '0.13s'],
]
const HANDLES = [
  [538, 325, 45], [1067, 321, 90], [1597, 325, -45], [535, 959, 0],
  [1601, 959, 0], [538, 1593, -45], [1067, 1597, 90], [1597, 1593, 45],
]

class DrawCanvas extends View {
  css() {
    return `
      :host { display: block; overflow: hidden; background: #fff; min-width: 0; min-height: 0; }
      svg { display: block; width: 100%; height: 100%; }
      text { font-family: "Liberation Serif", serif; fill: #000; text-anchor: middle; }
      .legend text { text-anchor: start; font-size: 17px; }
      .edge text { font-size: 15px; }
      .frame path { fill: none; stroke-width: 2; }
    `
  }
  node([x, y, w, h, size, [stroke, fill], text]) {
    const lines = text.split('|')
    const pitch = (h - 9) / lines.length
    const mid = y + h / 2
    const rows = lines.map((t, i) =>
      `<text x="${x + w / 2}" y="${Math.round(mid + (i - (lines.length - 1) / 2) * pitch + size / 3 - 1)}" font-size="${size}">${t}</text>`)
    return `<g><rect x="${x}" y="${y}" width="${w}" height="${h}" fill="${fill}" stroke="${stroke}"/>${rows.join('')}</g>`
  }
  edge([d, bx, by, tx, ty, color, width, lx, ly, label]) {
    const len = Math.hypot(tx - bx, ty - by)
    const half = width > 3 ? 6 : 5
    const nx = (-(ty - by) / len) * half
    const ny = ((tx - bx) / len) * half
    const rows = label.split('|').map((t, i) => `<text x="${lx}" y="${ly + i * 15}">${t}</text>`)
    return `<g class="edge"><path d="${d}" fill="none" stroke="${color}" stroke-width="${width}"/>
      <path d="M${bx + nx} ${by + ny}L${tx} ${ty}L${bx - nx} ${by - ny}z" fill="${color}"/>${rows.join('')}</g>`
  }
  html() {
    const legend = [
      'Type: cpu', 'Time: Oct 26, 2020 at 9:41pm (CST)', 'Duration: 5.03s, Total samples = 4.66s (92.64%)',
      'Showing nodes accounting for 4.61s, 98.93% of 4.66s total', 'Dropped 18 nodes (cum &lt;= 0.02s)',
    ]
    const frame = 'M551 337H1585M551 337V1581M1585 337V1581M551 1581H1585'
    return `
      <svg><g transform="translate(-138 -220)">
        <g class="legend">
          <rect x="562" y="348" width="437" height="111" fill="#fff" stroke="#222"/>
          <rect x="571" y="357" width="420" height="94" fill="#f8f8fb" stroke="#222"/>
          ${legend.map((t, i) => `<text x="579" y="${375 + i * 17}">${t}</text>`).join('')}
        </g>
        ${NODES.map(this.node).join('')}
        ${EDGES.map(this.edge).join('')}
        <g class="frame"><path d="${frame}" stroke="#fdfd8a"/><path d="${frame}" stroke="#555" stroke-dasharray="8 8"/></g>
        ${HANDLES.map(([x, y, r]) => `<path d="M-13 0L-5-8V-3H5V-8L13 0L5 8V3H-5V8z" transform="translate(${x} ${y}) rotate(${r})"/>`).join('')}
      </g></svg>`
  }
}

class CanvasArea extends View {
  css() {
    return `
      :host { flex: 1; min-width: 0; display: grid; grid-template: 52px 1fr 52px / 36px 1fr 36px; }
    `
  }
  html() {
    return `
      <tool-button corner icon="lock" size="28"></tool-button>
      <ruler-bar></ruler-bar>
      <tool-button corner icon="zoomone" size="28"></tool-button>
      <ruler-bar vertical></ruler-bar>
      <draw-canvas></draw-canvas>
      <scroll-track vertical></scroll-track>
      <span></span>
      <scroll-track></scroll-track>
      <tool-button corner icon="cms" size="28"></tool-button>`
  }
}

class ExportDock extends View {
  css() {
    return `
      :host { display: flex; flex-direction: column; flex: none; width: 736px; box-sizing: border-box; border-left: 2px solid #cfccc9; }
      header { display: flex; align-items: center; height: 68px; flex: none; gap: 2px; }
      header .title { flex: 1; }
      header button { width: 22px; height: 22px; padding: 0; margin: 0 26px 18px 24px; border: 2px solid #8e9290; border-radius: 5px; background: none; display: grid; place-items: center; }
      header svg { width: 12px; height: 12px; fill: #7c807e; stroke: #7c807e; }
      main { border: 2px solid #cbc8c4; padding: 14px 12px 18px; }
      h3 { margin: 14px 0 6px; font-size: 24px; line-height: 32px; }
      h3:first-child { margin: 0 0 12px; }
      .range { display: grid; grid-template-columns: repeat(4, 1fr); gap: 2px; margin-bottom: 12px; }
      .coords { display: grid; grid-template-columns: 347px 1fr; row-gap: 8px; --label-gap: 10px; }
      .unit { display: flex; justify-content: flex-end; margin-top: 6px; --field: 120px; }
      .size { display: grid; grid-template-columns: 347px 74px 200px 1fr; gap: 8px 8px; align-items: center; --field: 200px; --label-gap: 10px; }
      .dim { color: #929595; }
      .file { display: grid; grid-template-columns: 335px 148px 202px; justify-content: space-between; margin-bottom: 10px; }
      .file input { width: 100%; height: 68px; border: 2px solid var(--border); border-radius: 10px; padding: 0 16px 0 14px; font: inherit; color: #000; }
      check-box + check-box { margin-top: 10px; }
      .adv { display: flex; align-items: center; gap: 7px; margin: 5px 0 13px; padding: 0; border: 0; background: none; font: inherit; color: inherit; }
      .adv svg { width: 18px; height: 11px; fill: #2e3436; }
      .opts { display: grid; gap: 2px; margin: 5px 2px 67px; --field: 486px; --h: 66px; --label-align: left; }
      .bar { height: 8px; margin: 0 -6px 10px; border: 2px solid var(--border); border-radius: 4px; background: #fff; }
      .sel { --mark: -13px -7px -6px -7px; }
      .dpi { --mark: -9px 84px -1px -14px; }
      .exp { --mark: -13px 7px -12px -6px; }
    `
  }
  html() {
    return `
      <header>
        <app-icon name="export"></app-icon><span class="title">导出 PNG 图像(E) (⇧⌘E)</span>
        <button type="button" aria-label="iconify"><svg viewBox="0 0 12 12"><path d="M9 1v10L3 6z"/></svg></button>
        <button type="button" aria-label="close"><svg viewBox="0 0 12 12"><path d="M1 1l10 10M11 1L1 11" stroke-width="4"/></svg></button>
      </header>
      <main>
        <h3>导出范围</h3>
        <div class="range">
          <push-button>页面(P)</push-button>
          <push-button>绘图(D)</push-button>
          <mark-box class="sel"><push-button pressed>选区(S)</push-button></mark-box>
          <push-button>自定义(C)</push-button>
        </div>
        <div class="coords">
          <spin-box label="x0：" value="0.000"></spin-box><spin-box label="y0：" value="0.000"></spin-box>
          <spin-box label="x1：" value="486.855"></spin-box><spin-box label="y1：" value="585.000"></spin-box>
          <spin-box label="宽度(T)：" value="486.855"></spin-box><spin-box focused label="高度(G)：" value="585.000"></spin-box>
        </div>
        <div class="unit"><combo-box label="单位:" value="px"></combo-box></div>
        <h3>图片尺寸</h3>
        <div class="size">
          <spin-box label="宽度(W)：" value="6593"></spin-box><span>像素</span>
          <mark-box class="dpi"><spin-box name="dpi" value="1300.00"></spin-box></mark-box><span>dpi</span>
          <spin-box label="高度(H)：" value="7922"></spin-box><span>像素</span>
          <spin-box disabled name="dpi" value="1300.00"></spin-box><span class="dim">dpi</span>
        </div>
        <h3>文件名(F)</h3>
        <div class="file">
          <input id="file" aria-label="文件名" value="gkanqi/Desktop/viewport.png">
          <mark-box class="exp"><push-button>导出(E)</push-button></mark-box>
          <push-button><app-icon name="folder" size="28"></app-icon>导出为(E)...</push-button>
        </div>
        <check-box disabled>批次导出所有选择的对象(A)</check-box>
        <check-box>隐藏所有未选定对象</check-box>
        <button type="button" class="adv"><svg viewBox="0 0 18 11"><path d="M0 0h18l-9 11z"/></svg>Advanced</button>
        <check-box>Use interlacing</check-box>
        <div class="opts">
          <combo-box label="位深" value="RGBA_8"></combo-box>
          <combo-box label="Compression" value="Z_DEFAULT_COMPRESSION"></combo-box>
          <spin-box short off="minus" label="pHYs dpi" value="0.00"></spin-box>
          <combo-box label="抗锯齿" value="CAIRO_ANTIALIAS_GOOD (default)"></combo-box>
        </div>
        <div class="bar"></div>
        <check-box>完成时关闭</check-box>
      </main>`
  }
  ready() {
    const file = this.shadowRoot.getElementById('file')
    file.scrollLeft = file.scrollWidth
  }
}

const SWATCHES = `
  000000 1a1b1c 323334 4c4d4e 656667 808182 999a9b b2b3b4 cbcdce e4e5e7 eaebed f0f1f3 f8f9fb ffffff
  74150e ea3526 817f27 ffff55 377d22 74fa4c 367e7f 74fbfd 000780 0019f5 741b7c ea40f6
  280000 500a06 79140e 9e1f16 c4291c ea3526 eb453a ea615c ef8784 f3abaa f6d6d6
  240d0d 4a1a1a 6f2627 933330 b9423f c56663 d28c8a e0b2b2 eedada
  221e1d 443737 675352 8c7070 a79393 c4b7b7 e0dddb
  261503 4c260b 743713 9c4a1a c55d22 ee702e ee8843 f09e64 f4b68a f6cfb3 f9e7d8
  241a10 4a2e1b 6f462b 955d36 bb7543 c98f66 d6ab8c e1c7b2 efe3d8`.trim().split(/\s+/)

class ColorPalette extends View {
  css() {
    return `
      :host { display: flex; flex: none; height: 68px; }
      .list { flex: 1; min-width: 0; background: var(--trough); }
      .row { display: flex; height: 42px; overflow: hidden; }
      .row > * { flex: none; width: 38px; height: 42px; }
      .track { height: 26px; padding: 6px 6px; border-top: 2px solid #cbc8c4; }
      .track i { display: block; width: 468px; height: 12px; border-radius: 6px; background: var(--thumb); }
      button { flex: none; width: 72px; padding: 0; border: 0; background: none; display: grid; place-items: center; }
      button svg { width: 9px; height: 18px; fill: #2e3436; }
    `
  }
  html() {
    return `
      <div class="list">
        <div class="row">
          <svg viewBox="0 0 38 42"><path d="M0 0h38v42H0z" fill="#fff"/><path d="M0 0l38 42M38 0L0 42" stroke="#74150e" stroke-width="3"/></svg>
          ${SWATCHES.map((c) => `<span style="background:#${c}"></span>`).join('')}
        </div>
        <div class="track"><i></i></div>
      </div>
      <button type="button" aria-label="palette menu"><svg viewBox="0 0 9 18"><path d="M9 0v18L0 9z"/></svg></button>`
  }
}

class StatusBar extends View {
  css() {
    return `
      :host { position: relative; display: flex; align-items: center; flex: none; height: 68px; overflow: hidden; white-space: nowrap; }
      .style { display: grid; grid-template-columns: 80px auto; line-height: 34px; padding-left: 4px; }
      .o { --field: 135px; margin-left: 4px; }
      .o + tool-sep { margin: 0 0 0 5px; }
      combo-box { --field: 124px; --arrow: 24px; --inset: 28px; margin-left: -2px; }
      .msg { flex: 1; min-width: 0; overflow: hidden; margin-left: 4px; }
      .pos { display: grid; grid-template-columns: 68px 72px; line-height: 34px; margin-right: 24px; padding-left: 6px; }
      .pos span:nth-child(even) { text-align: right; }
      .z { --field: 188px; --step: 42px; }
      .rot { --field: 202px; --step: 42px; --label-gap: 20px; margin: 0 19px 0 20px; }
      .pct { --align: center; }
      .mark { position: absolute; right: 8px; bottom: 4px; font-size: 15px; line-height: 28px; color: rgba(140, 140, 140, .4); }
    `
  }
  html() {
    return `
      <div class="style"><span>填充：</span><b>未设</b><span>描边：</span><span><b>未设</b> 0.132</span></div>
      <spin-box class="o" off="plus" label="O：" value="100"></spin-box>
      <tool-sep></tool-sep>
      <tool-button icon="eye"></tool-button>
      <tool-button icon="unlockdim"></tool-button>
      <combo-box value="(根)"></combo-box>
      <span class="msg"><b>群组</b> 属于 <b>1</b> 个对象 在根. Click selection again to toggle scale/rotation handles..</span>
      <tool-sep></tool-sep>
      <div class="pos"><span>X：</span><span>143.88</span><span>Y：</span><span>108.15</span></div>
      <spin-box class="z pct" label="Z：" value="106%"></spin-box>
      <spin-box class="rot pct" label="旋转：" value="0.00°"></spin-box>
      <span class="mark">https://blog.csdn.net/Cassie_zkq</span>`
  }
}

class DrawApp extends View {
  css() {
    return `
      :host { display: flex; flex-direction: column; height: 100vh; }
      .work { flex: 1; min-height: 0; display: flex; }
    `
  }
  html() {
    return `
      <command-bar></command-bar>
      <select-bar></select-bar>
      <div class="work">
        <tool-box></tool-box>
        <canvas-area></canvas-area>
        <export-dock></export-dock>
        <snap-bar></snap-bar>
      </div>
      <color-palette></color-palette>
      <status-bar></status-bar>`
  }
}

const elements = {
  'app-icon': AppIcon, 'tool-button': ToolButton, 'tool-sep': ToolSep, 'spin-box': SpinBox,
  'combo-box': ComboBox, 'push-button': PushButton, 'check-box': CheckBox, 'mark-box': MarkBox,
  'command-bar': CommandBar, 'select-bar': SelectBar, 'tool-box': ToolBox, 'snap-bar': SnapBar,
  'ruler-bar': RulerBar, 'scroll-track': ScrollTrack, 'draw-canvas': DrawCanvas, 'canvas-area': CanvasArea,
  'export-dock': ExportDock, 'color-palette': ColorPalette, 'status-bar': StatusBar, 'draw-app': DrawApp,
}
for (const [tag, cls] of Object.entries(elements)) customElements.define(tag, cls)
</script>
</body>
</html>
